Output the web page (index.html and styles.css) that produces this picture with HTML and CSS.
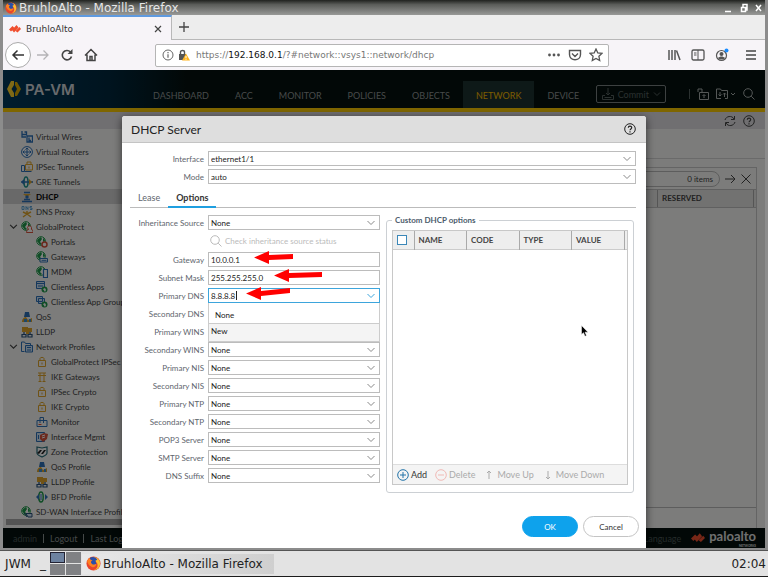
FILE: index.html
```html
<!DOCTYPE html>
<html lang="en">
<head>
  <meta charset="UTF-8" />
  <title>BruhloAlto</title>
  <link rel="stylesheet" href="styles.css">
</head>
<body>
  <svg class="sprite" aria-hidden="true">
    <symbol id="firefox" viewBox="0 0 16 16"><circle cx="8" cy="8" r="7.500" fill="#e8452c"/><path d="M8 1a7 7 0 0 1 7 7c0 4-3 7-7 7 4-1 5-4 4-7-1-2-3-3-4-7z" fill="#ffbd2e"/><path d="M4 2c3-2 7-1 8 2l-2 1 1 3c0 2-2 3-4 3-3 0-4-3-4-5z" fill="#2b4fa8"/><path d="M1 5c1 0 1-2 3-3 0 2 2 2 3 3-2 0-2 2-1 3 1 2 4 1 5 0 0 4-4 5-6 3-2-1-3-3-4-6z" fill="#ff7f1f"/></symbol>
    <symbol id="pan" viewBox="0 0 24 16"><path d="M7 2L0 9l4 4 7-7zM15 0L6 10l4 5 9-10zM21 4l-8 8 4 3 7-7z" fill="#f04e2e"/></symbol>
    <symbol id="lock" viewBox="0 0 12 12"><path d="M2.500 4.500h7v6h-7zM4 4.500V2.500C4 1 8 1 8 2.500v2M6 6.500v2" fill="none" stroke="#e0a52a"/></symbol>
    <symbol id="globe" viewBox="0 0 12 12"><circle cx="5" cy="5" r="4.300" fill="#fff" stroke="#1e9a4a"/><path d="M2 3l3-2 1 2-2 3 2 2-2 1-3-4zM7 2l2 2-1 3-1-2z" fill="#1e9a4a"/></symbol>
    <symbol id="wires" viewBox="0 0 12 12"><path d="M1 0v6h4M1 3.500h4.500V1h-2M6 5h5.500v6H6zM8 6.500v3h2" fill="none" stroke="#2c70b8" stroke-width="1.300"/></symbol>
    <symbol id="router" viewBox="0 0 12 12"><circle cx="6" cy="6" r="5.400" fill="#fff" stroke="#2c70b8"/><path d="M6 2v8M2 6h8M4.500 3.500L6 2l1.500 1.500M4.500 8.500L6 10l1.500-1.500M3.500 4.500L2 6l1.500 1.500M8.500 4.500L10 6 8.500 7.500" fill="none" stroke="#2c70b8"/></symbol>
    <symbol id="ipsec" viewBox="0 0 12 12"><path d="M.5 4.500h3v6h-3zM3.500 10.500h7" fill="none" stroke="#2c70b8"/><path d="M4.500 3.500h7v5.500h-7zM6 3.500V1h4v2.500M8 5.500v2" fill="none" stroke="#e0a52a"/></symbol>
    <symbol id="gre" viewBox="0 0 12 12"><ellipse cx="5" cy="6" rx="2" ry="5" fill="#fff" stroke="#1b8f8c" stroke-width="1.500"/><path d="M0 6h12M3 4L1 6l2 2" fill="none" stroke="#2c70b8" stroke-width="1.500"/><path d="M8 3l3 3-3 3z" fill="#e0a52a"/></symbol>
    <symbol id="dhcp" viewBox="0 0 12 12"><path d="M3 1.500h6M1 10.500h10M3 8.500h6" stroke="#2c70b8" stroke-width="1.500"/><path d="M2 3h8L6 6z" fill="#e0a52a"/><circle cx="6" cy="6" r="1.700" fill="#2c70b8"/></symbol>
    <symbol id="dns" viewBox="0 0 12 12"><path d="M1 .5v3h2v-3zM5 4V.5l2 3v-3M11 .5H9V2h2v1.500H9" fill="none" stroke="#4a9ad4" stroke-width=".9"/><path d="M2 11l4-3 4 3M6 8V5M2 6l4 2 4-2" fill="none" stroke="#e0a52a" stroke-width="1.400"/></symbol>
    <symbol id="gp" viewBox="0 0 12 12"><use href="#globe"/><path d="M6.500 6.500c0-2 4-2 4 0v2c2 0 1.500 3 1.500 3H5.500c0-2 1-3 2-3z" fill="#fff" stroke="#d9523c"/></symbol>
    <symbol id="portal" viewBox="0 0 12 12"><use href="#globe"/><circle cx="8.500" cy="8.500" r="2.500" fill="#fff" stroke="#d9523c" stroke-width="1.500"/></symbol>
    <symbol id="gateway" viewBox="0 0 12 12"><use href="#globe"/><path d="M4 7.500h7.500v3.500H4z" fill="#fff" stroke="#2c70b8"/><path d="M5.500 9.300h5" stroke="#2c70b8"/></symbol>
    <symbol id="mdm" viewBox="0 0 12 12"><use href="#globe"/><path d="M7.500 3.500h4v8h-4z" fill="#fff" stroke="#2c70b8" stroke-width="1.200"/></symbol>
    <symbol id="app" viewBox="0 0 12 12"><path d="M.5.5h8v7h-8zM.5 2.500h8M2 5h5" fill="#cfe3f5" stroke="#2c70b8"/><circle cx="8.500" cy="8.500" r="3" fill="#1e9a4a"/><path d="M7 8l2-1 1 2-1 2z" fill="#fff"/></symbol>
    <symbol id="apps" viewBox="0 0 12 12"><path d="M.5.5h6v5h-6zM2.500 2.500h6v5h-6z" fill="#cfe3f5" stroke="#2c70b8"/><circle cx="8.500" cy="8.500" r="3" fill="#1e9a4a"/><path d="M7 8l2-1 1 2-1 2z" fill="#fff"/></symbol>
    <symbol id="qos" viewBox="0 0 12 12"><path d="M4 1h4l1 5H3z" fill="#2c70b8"/><path d="M1 11c0-4 3-5 4-5l2 3 4-2v4z" fill="#e0a52a"/><path d="M3 11V8h3v3zM8 11V8h2v3z" fill="#3f8fd0"/></symbol>
    <symbol id="lldp" viewBox="0 0 12 12"><path d="M1 1h6v5H1zM7 2h4v4H7zM5 6h3v2H5z" fill="#e0a52a"/><path d="M1 8.500h4v2.500H1zM7 8.500h4v2.500H7zM3 8V6M9 8V6" fill="none" stroke="#28517c" stroke-width="1.200"/></symbol>
    <symbol id="profiles" viewBox="0 0 12 12"><path d="M.5 10.500V1h3l1 1.500h5V4M.5 10.500h3" fill="none" stroke="#2c70b8"/><path d="M4.500 4.500h7v6.500h-7zM6 6.500h4M6 9h4" fill="#cfe3f5" stroke="#2c70b8"/></symbol>
    <symbol id="ike" viewBox="0 0 12 12"><path d="M2 2h8M2 4.500h8M4 2v9M8 2v9M2.500 10.500h3M6.500 10.500h3" fill="none" stroke="#e0a52a"/></symbol>
    <symbol id="monitor" viewBox="0 0 12 12"><path d="M1 4.500h10v6H1zM4 7V1.500h3.500V7" fill="none" stroke="#2c70b8"/><path d="M2.500 8.500h3" stroke="#d9523c"/></symbol>
    <symbol id="iface" viewBox="0 0 12 12"><path d="M.5 1.500h8v9h-8zM2.500 4v4" fill="#cfe3f5" stroke="#2c70b8"/><path d="M4 4l4-2 4 1-1 5-4 3-3-3z" fill="#d9523c"/><path d="M6 5l3-1M6 7l3-1" stroke="#fff"/></symbol>
    <symbol id="zone" viewBox="0 0 12 12"><path d="M1 1l5 1 5-1v6c0 2-3 3-5 4-2-1-5-2-5-4z" fill="#fff" stroke="#246b78" stroke-width="1.200"/><path d="M1 7l3-3h2L3 8zM5 8l3-4h2L7 8z" fill="#222"/></symbol>
    <symbol id="bfd" viewBox="0 0 12 12"><ellipse cx="5" cy="6" rx="2.200" ry="5" fill="#fff" stroke="#1e9a4a" stroke-width="1.500"/><path d="M3 3L0 6l3 3zM9 3l3 3-3 3z" fill="#2c70b8"/><path d="M5 3v6" stroke="#2c70b8"/></symbol>
    <symbol id="sdwan" viewBox="0 0 12 12"><use href="#globe"/><path d="M5 7.500h6v3.500H7zM3 7l3 4" fill="#cfe3f5" stroke="#28517c"/></symbol>
    <symbol id="help" viewBox="0 0 12 12"><circle cx="6" cy="6" r="5.300" fill="none" stroke="currentColor"/><path d="M4.300 4.800C4.300 2.500 7.700 2.500 7.700 4.600 7.700 6 6 5.800 6 7.300M6 8.200v1.200" fill="none" stroke="currentColor" stroke-width="1.200"/></symbol>
    <symbol id="search" viewBox="0 0 12 12"><circle cx="5" cy="5" r="4.300" fill="none" stroke="currentColor"/><path d="M8.200 8.200l3.300 3.300" stroke="currentColor"/></symbol>
    <symbol id="chevron" viewBox="0 0 8 8"><path d="M1 2.500l3 3 3-3" fill="none" stroke="currentColor"/></symbol>
  </svg>

  <div class="window">
    <div class="titlebar">
      <svg class="i12"><use href="#firefox"/></svg>
      <span class="grow">BruhloAlto - Mozilla Firefox</span>
      <svg class="winctl" viewBox="0 0 40 10"><path d="M2 8.500h6M18.500 4.500h4v4h-4zM20 4V1.500h4V7h-1M33 2l5 6M38 2l-5 6" fill="none" stroke="#fff" stroke-width="1.500"/></svg>
    </div>

    <div class="tabstrip">
      <div class="tab">
        <svg class="i12"><use href="#pan"/></svg>
        <span class="grow">BruhloAlto</span>
        <button aria-label="Close tab"><svg class="i8" viewBox="0 0 8 8"><path d="M1 1l6 6M7 1L1 7" stroke="#444" stroke-width="1.200"/></svg></button>
      </div>
      <button class="newtab" aria-label="New tab"><svg class="i12" viewBox="0 0 12 12"><path d="M6 1v10M1 6h10" stroke="#444" stroke-width="1.300"/></svg></button>
    </div>

    <div class="toolbar">
      <button class="back" aria-label="Back"><svg class="i14" viewBox="0 0 14 14"><path d="M13 7H2M6.500 2.500L2 7l4.500 4.500" fill="none" stroke="#333" stroke-width="1.500"/></svg></button>
      <button aria-label="Forward"><svg class="i14" viewBox="0 0 14 14"><path d="M1 7h11M7.500 2.500L12 7l-4.500 4.500" fill="none" stroke="#b5b3b6" stroke-width="1.300"/></svg></button>
      <button aria-label="Reload"><svg class="i14" viewBox="0 0 14 14"><path d="M11.500 8.500A4.700 4.700 0 1 1 10.500 4" fill="none" stroke="#444" stroke-width="1.600"/><path d="M12.500 1v5h-5z" fill="#444"/></svg></button>
      <button aria-label="Home"><svg class="i14" viewBox="0 0 14 14"><path d="M1 7.500l6-6 6 6M3 6.500v6h8v-6M6 12V8.500h2V12" fill="none" stroke="#444" stroke-width="1.500"/></svg></button>
      <div class="urlbar">
        <svg class="i12" viewBox="0 0 12 12"><circle cx="6" cy="6" r="5" fill="none" stroke="#666"/><path d="M6 5.200v3.600M6 3v1.200" stroke="#666" stroke-width="1.200"/></svg>
        <svg class="i12" viewBox="0 0 12 12"><path d="M1 5h7v6H1z" fill="#555"/><path d="M2.500 5V3c0-2 4-2 4 0v2" fill="none" stroke="#555" stroke-width="1.400"/><path d="M8 4.500l4 7H4z" fill="#ffb41f"/><path d="M8 7v2M8 9.700v1" stroke="#fff"/></svg>
        <span class="url grow">https://<b>192.168.0.1</b>/?#network::vsys1::network/dhcp</span>
        <div class="urlicons">
          <svg class="i14" viewBox="0 0 14 14"><g fill="#555"><circle cx="2.500" cy="7" r="1.400"/><circle cx="7" cy="7" r="1.400"/><circle cx="11.500" cy="7" r="1.400"/></g></svg>
          <svg class="i14" viewBox="0 0 14 14"><path d="M1.500 2.500h11v4c0 7-11 7-11 0zM4 5.500l3 3 3-3" fill="none" stroke="#555" stroke-width="1.400"/></svg>
          <svg class="i14" viewBox="0 0 14 14"><path d="M7 1l1.800 3.900 4.200.5-3.100 2.900.8 4.200L7 10.400l-3.700 2.100.8-4.200L1 5.400l4.200-.5z" fill="none" stroke="#555" stroke-width="1.300"/></svg>
        </div>
      </div>
      <div class="tools">
        <svg class="i14" viewBox="0 0 14 14"><path d="M2 2v10M5 2v10M8 2v10M9.500 2.500L13 12" stroke="#555" stroke-width="1.500"/></svg>
        <svg class="i14" viewBox="0 0 14 14"><rect x="1" y="2" width="12" height="10" rx="1.500" fill="none" stroke="#555" stroke-width="1.300"/><path d="M7 2v10M3 5h2.500M3 7h2.500" stroke="#555"/></svg>
        <svg class="i14" viewBox="0 0 14 14"><circle cx="6.500" cy="7.500" r="5" fill="none" stroke="#555" stroke-width="1.200"/><circle cx="6.500" cy="6" r="2" fill="#555"/><path d="M3 10c2-2 5-2 7 0-2 2-5 2-7 0z" fill="#555"/><circle cx="11.500" cy="2.500" r="2" fill="#1a8cff"/></svg>
        <svg class="i14 menu" viewBox="0 0 14 14"><path d="M2 3h10M2 7h10M2 11h10" stroke="#444" stroke-width="1.500"/></svg>
      </div>
    </div>

    <div class="page">
      <header class="header">
        <div class="logo">
          <svg viewBox="0 0 14 16"><path d="M7 0H4L0 8l4 8h3v-4L4.500 8 7 4z" fill="#ffd52e"/><path d="M8 1h2l4 7-4 7H8v-3l2-4-2-4z" fill="#d9a800"/></svg>
          PA-VM
        </div>
        <nav>
          <a href="#">DASHBOARD</a>
          <a href="#">ACC</a>
          <a href="#">MONITOR</a>
          <a href="#">POLICIES</a>
          <a href="#">OBJECTS</a>
          <a href="#" class="active">NETWORK</a>
          <a href="#">DEVICE</a>
        </nav>
        <button class="commit">
          <svg class="i12" viewBox="0 0 12 12"><path d="M6 0v7M4 5l2 2 2-2M3 7.500H.5v4h11v-4H9M2.500 9.500h7" fill="none" stroke="currentColor"/></svg>
          Commit
          <svg class="i8"><use href="#chevron"/></svg>
        </button>
        <div class="actions">
          <i></i>
          <svg class="i12" viewBox="0 0 12 12"><path d="M2.500 4.500h9v7h-9zM5 4V1H1v3M7 10V7M5.500 8L7 6.500 8.500 8" fill="none" stroke="currentColor"/></svg>
          <svg class="wide" viewBox="0 0 20 12"><path d="M5 10.500H.5V1h4l1 1.500h6v8H9M4 4v4M2.500 6.500L4 8l1.500-1.500M8.500 9V5M7 6.500L8.500 5 10 6.500M15 5l2 2 2-2" fill="none" stroke="currentColor"/></svg>
          <svg class="i12"><use href="#search"/></svg>
        </div>
      </header>

      <div class="subbar">
        <svg class="i12" viewBox="0 0 12 12"><path d="M1 5c1-4 7-5 9-1M10.500 1v3.500H7M11 7c-1 4-7 5-9 1M1.500 11V7.500H5" fill="none" stroke="currentColor"/></svg>
        <svg class="i12"><use href="#help"/></svg>
      </div>

      <div class="main">
        <aside class="sidebar">
          <ul class="tree">
            <li><svg><use href="#wires"/></svg>Virtual Wires</li>
            <li><svg><use href="#router"/></svg>Virtual Routers</li>
            <li><svg><use href="#ipsec"/></svg>IPSec Tunnels</li>
            <li><svg><use href="#gre"/></svg>GRE Tunnels</li>
            <li class="selected"><svg><use href="#dhcp"/></svg>DHCP</li>
            <li><svg><use href="#dns"/></svg>DNS Proxy</li>
            <li class="open"><svg class="toggle"><use href="#chevron"/></svg><svg><use href="#gp"/></svg>GlobalProtect</li>
            <li class="sub"><svg><use href="#portal"/></svg>Portals</li>
            <li class="sub"><svg><use href="#gateway"/></svg>Gateways</li>
            <li class="sub"><svg><use href="#mdm"/></svg>MDM</li>
            <li class="sub"><svg><use href="#app"/></svg>Clientless Apps</li>
            <li class="sub"><svg><use href="#apps"/></svg>Clientless App Groups</li>
            <li><svg><use href="#qos"/></svg>QoS</li>
            <li><svg><use href="#lldp"/></svg>LLDP</li>
            <li class="open"><svg class="toggle"><use href="#chevron"/></svg><svg><use href="#profiles"/></svg>Network Profiles</li>
            <li class="sub"><svg><use href="#lock"/></svg>GlobalProtect IPSec Crypto</li>
            <li class="sub"><svg><use href="#ike"/></svg>IKE Gateways</li>
            <li class="sub"><svg><use href="#lock"/></svg>IPSec Crypto</li>
            <li class="sub"><svg><use href="#lock"/></svg>IKE Crypto</li>
            <li class="sub"><svg><use href="#monitor"/></svg>Monitor</li>
            <li class="sub"><svg><use href="#iface"/></svg>Interface Mgmt</li>
            <li class="sub"><svg><use href="#zone"/></svg>Zone Protection</li>
            <li class="sub"><svg><use href="#qos"/></svg>QoS Profile</li>
            <li class="sub"><svg><use href="#lldp"/></svg>LLDP Profile</li>
            <li class="sub"><svg><use href="#bfd"/></svg>BFD Profile</li>
            <li><svg><use href="#sdwan"/></svg>SD-WAN Interface Profile</li>
          </ul>
          <div class="hscroll"></div>
        </aside>
        <section class="content">
          <div class="crumb"></div>
          <div class="grid-panel">
            <div class="filter">
              <span class="count">0 items</span>
              <svg class="i12" viewBox="0 0 12 12"><path d="M1 6h10M7 2l4 4-4 4" fill="none" stroke="currentColor"/></svg>
              <svg class="i12" viewBox="0 0 12 12"><path d="M1.500 1.500l9 9M10.500 1.500l-9 9" stroke="currentColor"/></svg>
            </div>
            <div class="grid-head"><span>RESERVED</span></div>
            <div class="grid-foot"></div>
          </div>
        </section>
      </div>

      <footer class="footer">
        <a href="#">admin</a><i></i><a href="#" class="lit">Logout</a><i></i><a href="#" class="lit grow">Last Login Time</a>
        <a href="#">Language</a>
        <span class="brand"><svg><use href="#pan"/></svg><span>paloalto<small>NETWORKS</small></span></span>
      </footer>

      <div class="overlay">
        <form class="dialog" role="dialog" aria-labelledby="dialogTitle">
          <div class="dialog-head">
            <h1 id="dialogTitle">DHCP Server</h1>
            <svg class="i12"><use href="#help"/></svg>
          </div>
          <div class="dialog-body">
            <div class="rows">
              <div class="row"><label for="interface">Interface</label><select id="interface"><option>ethernet1/1</option></select></div>
              <div class="row"><label for="mode">Mode</label><select id="mode"><option>auto</option></select></div>
            </div>
            <div class="tabs" role="tablist">
              <button type="button" role="tab">Lease</button>
              <button type="button" role="tab" class="active" aria-selected="true">Options</button>
            </div>
            <div class="columns">
              <div class="rows">
                <div class="row"><label for="source">Inheritance Source</label><select id="source"><option>None</option></select></div>
                <div class="row check"><button type="button" disabled><svg class="i12"><use href="#search"/></svg>Check inheritance source status</button></div>
                <div class="row"><label for="gateway-ip">Gateway</label><input id="gateway-ip" type="text" value="10.0.0.1">
                  <svg class="arrow gw" viewBox="0 0 46 14"><path d="M0 7.500L15 1v4l24-1v5l-24 1v4z"/></svg></div>
                <div class="row"><label for="mask">Subnet Mask</label><input id="mask" type="text" value="255.255.255.0">
                  <svg class="arrow mask" viewBox="0 0 50 14"><path d="M0 7.500L15 1v4l33-1v5l-33 1v4z"/></svg></div>
                <div class="row"><label for="dns1">Primary DNS</label><input id="dns1" class="combo" type="text" value="8.8.8.8">
                  <svg class="arrow pdns" viewBox="0 0 46 14"><path d="M0 7.500L15 1v4l29-3v5l-29 3v4z"/></svg>
                  <ul class="options"><li>None</li><li class="new">New</li></ul></div>
                <div class="row"><label for="dns2">Secondary DNS</label><select id="dns2"><option>None</option></select></div>
                <div class="row"><label for="wins1">Primary WINS</label><select id="wins1"><option>None</option></select></div>
                <div class="row"><label for="wins2">Secondary WINS</label><select id="wins2"><option>None</option></select></div>
                <div class="row"><label for="nis1">Primary NIS</label><select id="nis1"><option>None</option></select></div>
                <div class="row"><label for="nis2">Secondary NIS</label><select id="nis2"><option>None</option></select></div>
                <div class="row"><label for="ntp1">Primary NTP</label><select id="ntp1"><option>None</option></select></div>
                <div class="row"><label for="ntp2">Secondary NTP</label><select id="ntp2"><option>None</option></select></div>
                <div class="row"><label for="pop3">POP3 Server</label><select id="pop3"><option>None</option></select></div>
                <div class="row"><label for="smtp">SMTP Server</label><select id="smtp"><option>None</option></select></div>
                <div class="row"><label for="suffix">DNS Suffix</label><select id="suffix"><option>None</option></select></div>
              </div>
              <fieldset class="custom">
                <legend>Custom DHCP options</legend>
                <div class="custom-grid">
                  <table>
                    <thead>
                      <tr><th class="tick"><input type="checkbox" aria-label="Select all"></th><th>NAME</th><th>CODE</th><th>TYPE</th><th>VALUE</th><th class="end"></th></tr>
                    </thead>
                  </table>
                  <div class="grid-actions">
                    <button type="button" class="add"><svg class="i12" viewBox="0 0 12 12"><circle cx="6" cy="6" r="5.300" fill="none" stroke="#2273a8"/><path d="M6 3v6M3 6h6" stroke="#2273a8"/></svg>Add</button>
                    <button type="button" disabled><svg class="i12" viewBox="0 0 12 12"><circle cx="6" cy="6" r="5.300" fill="none" stroke="#f0b9b5"/><path d="M3 6h6" stroke="#f0b9b5"/></svg>Delete</button>
                    <button type="button" disabled><svg class="i12" viewBox="0 0 12 12"><path d="M6 10V2M4 4l2-2 2 2" fill="none" stroke="#aaa"/></svg>Move Up</button>
                    <button type="button" disabled><svg class="i12" viewBox="0 0 12 12"><path d="M6 2v8M4 8l2 2 2-2" fill="none" stroke="#aaa"/></svg>Move Down</button>
                  </div>
                </div>
              </fieldset>
            </div>
          </div>
          <div class="dialog-foot">
            <button type="button" class="primary">OK</button>
            <button type="button">Cancel</button>
          </div>
        </form>
        <svg class="cursor" viewBox="0 0 8 12"><path d="M.5.5v9l2-1.800 1.500 3.600 1.500-.7L4 7.200h3z" fill="#000" stroke="#fff" stroke-width=".5"/></svg>
      </div>
    </div>
  </div>

  <div class="taskbar">
    <button class="jwm">JWM</button>
    <span class="hide">_</span>
    <div class="pager"><b></b><b></b><b></b><b></b></div>
    <button class="task"><svg><use href="#firefox"/></svg>BruhloAlto - Mozilla Firefox</button>
    <time>02:04</time>
  </div>
</body>
</html>
```

FILE: styles.css
```css
* {
  box-sizing: border-box;
}

body {
  margin: 0;
  height: 100vh;
  display: flex;
  flex-direction: column;
  font-family: "DejaVu Sans", sans-serif;
  font-size: 12px;
  background: #1c1c1c;
  overflow: hidden;
}

button {
  display: flex;
  align-items: center;
  justify-content: center;
  padding: 0;
  border: none;
  background: none;
  font: inherit;
  color: inherit;
  white-space: nowrap;
}

a {
  color: inherit;
  text-decoration: none;
}

ul {
  list-style: none;
  margin: 0;
  padding: 0;
}

svg {
  flex: none;
}

.sprite {
  position: absolute;
  width: 0;
  height: 0;
}

.i8 { width: 8px; height: 8px; }
.i12 { width: 12px; height: 12px; }
.i14 { width: 14px; height: 14px; }
.grow { flex: 1; }

/* window frame */
.window {
  flex: 1;
  min-height: 0;
  display: flex;
  flex-direction: column;
  border: solid #8c8c8c;
  border-width: 0 3px 2px;
}

.titlebar {
  display: flex;
  align-items: center;
  gap: 2px;
  height: 15px;
  padding: 0 2px;
  background: linear-gradient(#20221f, #5a5c59 30%, #989997);
  color: #e6e6e6;
}

.winctl {
  width: 40px;
  height: 10px;
}

.tabstrip {
  display: flex;
  height: 25px;
  background: #ededed;
  border-bottom: 1px solid #b8b8b8;
}

.tab {
  display: flex;
  align-items: center;
  gap: 5px;
  width: 169px;
  height: 25px;
  padding: 0 9px 0 6px;
  background: #f7f4f8;
  border-top: 2px solid #5f9ae0;
  border-right: 1px solid #b8b8b8;
  font-size: 9px;
  color: #333;
}

.newtab {
  width: 24px;
}

.toolbar {
  display: flex;
  align-items: center;
  gap: 10px;
  height: 30px;
  padding: 0 7px 0 2px;
  background: #f7f4f8;
}

.back {
  width: 26px;
  height: 26px;
  margin-right: -5px;
  border: 1px solid #aaa;
  border-radius: 50%;
  background: #fff;
}

.urlbar {
  flex: 1;
  display: flex;
  align-items: center;
  gap: 4px;
  height: 23px;
  margin-left: 47px;
  padding: 0 5px 0 6px;
  background: #fff;
  border: 1px solid #b5b5b5;
  border-radius: 2px;
}

.urlicons {
  display: flex;
  gap: 7px;
}

.url {
  padding-left: 2px;
  font-size: 9px;
  color: #777;
}

.url b {
  font-weight: normal;
  color: #111;
}

.tools {
  display: flex;
  gap: 10px;
  margin-left: 48px;
}

.tools .menu {
  margin-left: 5px;
}

/* web page behind the dialog */
.page {
  flex: 1;
  min-height: 0;
  display: flex;
  flex-direction: column;
  position: relative;
  font-family: Lato, sans-serif;
  font-size: 8px;
  color: #444;
  background: #f8f9f6;
  overflow: hidden;
}

.header {
  display: flex;
  height: 42px;
  background: linear-gradient(90deg, #003a5c, #00283e 14%, #04110f 24%);
  border-bottom: 4px solid #ffcc00;
  color: #8e9493;
  font-size: 9px;
}

.logo {
  flex: none;
  display: flex;
  align-items: center;
  gap: 4px;
  width: 137px;
  padding-left: 4px;
  font-family: Inter, sans-serif;
  font-size: 15px;
  font-weight: 600;
  color: #d0d4d8;
}

.logo svg {
  width: 14px;
  height: 16px;
}

.header nav {
  display: flex;
  padding-top: 11px;
}

.header nav a {
  display: flex;
  align-items: center;
  padding: 2px 13px 0;
}

.header nav .active {
  background: #1d3230;
  color: #f5b800;
}

.commit {
  flex: none;
  gap: 4px;
  width: 70px;
  height: 18px;
  margin: 15px 0 0 4px;
  border: 1px solid #7b8382;
  border-radius: 2px;
  color: #566260;
}

.actions {
  flex: 1;
  display: flex;
  align-items: center;
  justify-content: flex-end;
  gap: 7px;
  padding: 9px 10px 0 0;
  color: #aab0af;
}

.actions i {
  width: 1px;
  height: 10px;
  background: #566260;
}

.actions .wide {
  width: 20px;
  height: 12px;
}

.subbar {
  display: flex;
  align-items: center;
  justify-content: flex-end;
  gap: 7px;
  height: 17px;
  padding-right: 10px;
  background: #e0dfe3;
}

.main {
  flex: 1;
  min-height: 0;
  display: flex;
}

.sidebar {
  width: 170px;
  display: flex;
  flex-direction: column;
}

.tree {
  flex: 1;
  overflow: hidden;
}

.tree li {
  display: flex;
  align-items: center;
  gap: 3px;
  height: 15px;
  padding-left: 18px;
  white-space: nowrap;
}

.tree svg {
  width: 12px;
  height: 12px;
}

.tree .sub {
  padding-left: 33px;
}

.tree .open {
  padding-left: 6px;
}

.tree .open .toggle {
  width: 9px;
  height: 9px;
}

.tree .selected {
  background: #d2d2d2;
  font-weight: bold;
  color: #000;
}

.hscroll {
  height: 6px;
  margin: 0 3px 3px;
  background: #a8a8a8;
}

.content {
  flex: 1;
  display: flex;
  flex-direction: column;
  padding-right: 8px;
}

.crumb {
  height: 30px;
  margin: 0 -8px 8px 0;
  border-bottom: 1px solid #d4d4d4;
}

.grid-panel {
  flex: 1;
  display: flex;
  flex-direction: column;
  border: 1px solid #c8c8c8;
  border-bottom: none;
}

.filter {
  display: flex;
  align-items: center;
  justify-content: flex-end;
  gap: 4px;
  height: 21px;
  padding-right: 4px;
}

.count {
  flex: 1;
  padding: 2px 6px;
  border: 1px solid #bbb;
  border-radius: 8px;
  text-align: right;
}

.grid-head {
  display: flex;
  justify-content: flex-end;
  height: 19px;
  background: #e4e5e2;
  border: solid #c0c0c0;
  border-width: 1px 0;
  font-weight: bold;
}

.grid-head span {
  width: 97px;
  padding: 3px 4px;
  margin-right: 2px;
  border: solid #aaa;
  border-width: 0 1px;
}

.grid-foot {
  flex: 1;
  margin-bottom: 20px;
  border-bottom: 1px solid #bbb;
}

.footer {
  display: flex;
  align-items: center;
  gap: 6px;
  height: 20px;
  padding: 0 9px 0 10px;
  background: #04110f;
  color: #4a5654;
  font-size: 9px;
}

.footer .lit {
  color: #8b9291;
}

.footer i {
  width: 1px;
  height: 9px;
  background: #8b9291;
}

.brand {
  display: flex;
  align-items: center;
  gap: 4px;
  margin-left: 4px;
  font-size: 13px;
  font-weight: bold;
  line-height: 16px;
  color: #e0e0e0;
}

.brand span {
  display: flex;
  flex-direction: column;
}

.brand small {
  align-self: flex-end;
  font-size: 3px;
  line-height: 4px;
}

.brand svg {
  width: 14px;
  height: 10px;
}

/* dialog */
.overlay {
  position: absolute;
  inset: 0;
  padding: 46px 119px 0;
  background: rgba(0, 0, 0, 0.5);
}

.dialog {
  display: flex;
  flex-direction: column;
  height: 100%;
  background: #fff;
  border-radius: 3px 3px 0 0;
  box-shadow: 0 2px 8px rgba(0, 0, 0, 0.6);
  color: #5e656d;
}

.dialog-head {
  display: flex;
  align-items: center;
  justify-content: space-between;
  height: 27px;
  padding: 0 10px 0 9px;
  background: #dedede;
  border-bottom: 1px solid #c4c4c4;
  border-radius: 3px 3px 0 0;
  color: #222;
}

.dialog-head h1 {
  margin: 0;
  font-size: 12px;
  font-weight: normal;
}

.dialog-body {
  padding: 8px 10px 0 8px;
}

.rows {
  display: flex;
  flex-direction: column;
  gap: 3px;
}

.row {
  display: flex;
  align-items: center;
  gap: 4px;
  height: 15px;
  position: relative;
}

.row label {
  width: 74px;
  text-align: right;
  white-space: nowrap;
}

.row select,
.row input {
  flex: 1;
  min-width: 0;
  height: 15px;
  padding: 0 2px;
  border: 1px solid #bcbcbc;
  border-radius: 0;
  appearance: none;
  outline: none;
  background: #fff;
  font: inherit;
  color: #222;
}

.row select,
.row .combo {
  background: #fff url("data:image/svg+xml,%3Csvg xmlns='http://www.w3.org/2000/svg' width='8' height='6'%3E%3Cpath d='M.5 1L4 4.500 7.500 1' fill='none' stroke='%23888'/%3E%3C/svg%3E") no-repeat right 4px center;
}

.row .combo {
  border-color: #3da5dc;
  background:
    linear-gradient(#222, #222) 27px 2px / 1px 9px no-repeat,
    url("data:image/svg+xml,%3Csvg xmlns='http://www.w3.org/2000/svg' width='8' height='6'%3E%3Cpath d='M.5 1L4 4.500 7.500 1' fill='none' stroke='%233da5dc'/%3E%3C/svg%3E") no-repeat right 4px center;
}

.row.check {
  height: 16px;
  padding-left: 80px;
}

.check button {
  gap: 3px;
  color: #bbb;
}

.tabs {
  display: flex;
  height: 24px;
  margin-bottom: 7px;
  border-bottom: 1px solid #bbb;
  font-size: 9px;
}

.tabs button {
  padding: 0 8px;
  margin-top: 4px;
}

.tabs .active {
  margin-bottom: -1px;
  border-bottom: 2px solid #1f9fe0;
  font-weight: bold;
  color: #333;
}

.columns {
  display: grid;
  grid-template-columns: 1fr 1fr;
  gap: 6px;
}

.options {
  position: absolute;
  z-index: 2;
  top: 15px;
  left: 78px;
  right: 0;
  background: #fff;
  border: 1px solid #ccc;
  border-top: none;
  color: #222;
}

.options li {
  height: 20px;
  padding: 7px 6px 0;
}

.options .new {
  height: 18px;
  padding: 2px;
  background: #f4f4f4;
  border-top: 1px solid #ccc;
}

.arrow {
  position: absolute;
  z-index: 3;
  width: 46px;
  height: 14px;
  fill: #f00;
}

.arrow.gw { left: 124px; top: -2px; }
.arrow.mask { left: 144px; top: -2px; width: 50px; }
.arrow.pdns { left: 116px; top: -2px; }

.custom {
  display: flex;
  min-width: 0;
  margin: 0 2px -10px 0;
  padding: 5px 5px 7px;
  border: 1px solid #ccd0d4;
  border-radius: 3px;
}

.custom legend {
  padding: 0 3px;
  font-weight: bold;
  color: #4c5c6c;
}

.custom-grid {
  flex: 1;
  display: flex;
  flex-direction: column;
  border: 1px solid #c8c8c8;
}

.custom table {
  width: 100%;
  table-layout: fixed;
  border-collapse: collapse;
  background: #eee;
  border-bottom: 1px solid #ccc;
}

.custom th {
  height: 18px;
  padding: 0 4px;
  border-right: 1px solid #aaa;
  text-align: left;
  font-size: 8px;
  color: #444;
}

.custom th.tick {
  width: 21px;
}

.custom th.end {
  width: 3px;
  padding: 0;
  border: none;
}

.custom input {
  display: block;
  width: 10px;
  height: 10px;
  margin: 0;
  appearance: none;
  border: 1px solid #3b87b8;
  background: #fff;
}

.grid-actions {
  display: flex;
  gap: 8px;
  height: 20px;
  margin-top: auto;
  padding-left: 4px;
  background: #f4f4f4;
  border-top: 1px solid #ddd;
  font-size: 9px;
  color: #aaa;
}

.grid-actions button {
  gap: 2px;
}

.grid-actions .add {
  color: #333;
}

.dialog-foot {
  display: flex;
  justify-content: flex-end;
  gap: 5px;
  margin-top: auto;
  padding: 0 7px 11px;
}

.dialog-foot button {
  width: 56px;
  height: 21px;
  border: 1px solid #c4c4c4;
  border-radius: 11px;
  color: #333;
}

.dialog-foot .primary {
  border-color: #0ea2ec;
  background: #0ea2ec;
  color: #fff;
}

.cursor {
  position: absolute;
  left: 578px;
  top: 255px;
  width: 8px;
  height: 12px;
}

/* taskbar */
.taskbar {
  display: flex;
  align-items: center;
  height: 26px;
  margin-bottom: 1px;
  background: #e3e3e3;
  border-top: 1px solid #555;
  color: #222;
}

.jwm {
  width: 36px;
}

.hide {
  width: 14px;
  text-align: center;
}

.pager {
  display: grid;
  grid-template-columns: 15px 15px;
  grid-template-rows: 11px 11px;
  gap: 1px;
}

.pager b {
  background: #808184;
}

.pager b:first-child {
  background: #6d82a0;
  border: 1px solid #223;
}

.task {
  justify-content: flex-start;
  gap: 2px;
  width: 192px;
  height: 20px;
  margin-left: 1px;
  padding-left: 4px;
  background: linear-gradient(90deg, #e8e8e8, #cfcfcf);
}

.task svg {
  width: 15px;
  height: 15px;
}

.taskbar time {
  margin-left: auto;
  padding-right: 2px;
}
```
